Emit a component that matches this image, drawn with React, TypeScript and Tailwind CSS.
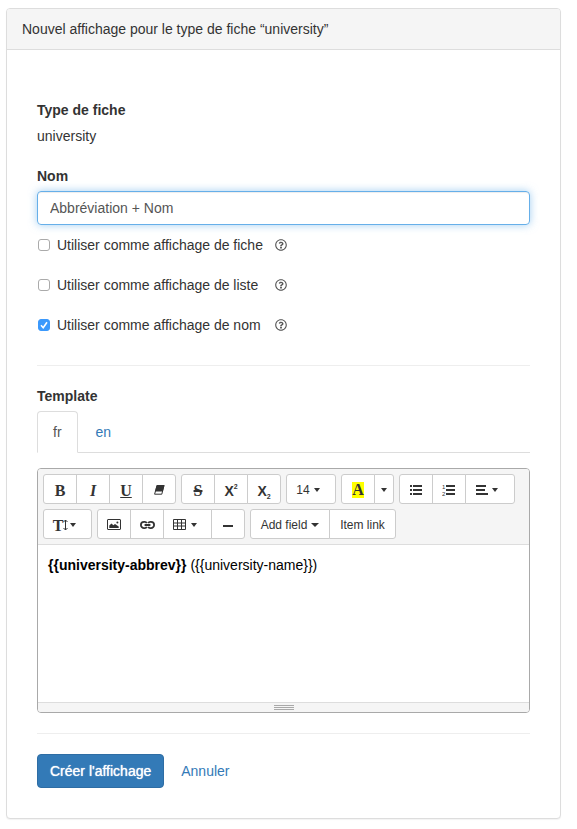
import { useState } from "react";
import type { ReactNode } from "react";
import { FaRegQuestionCircle } from "react-icons/fa";

function Caret() {
  return (
    <svg width="6" height="4" viewBox="0 0 6 4" className="shrink-0" aria-hidden="true">
      <path d="M0 0h6L3 4z" fill="currentColor" />
    </svg>
  );
}

function WideCaret() {
  return (
    <svg width="8" height="4" viewBox="0 0 8 4" className="shrink-0" aria-hidden="true">
      <path d="M0 0h8L4 4z" fill="currentColor" />
    </svg>
  );
}

function EraserIcon() {
  return (
    <svg width="12" height="12" viewBox="0 0 12 12" aria-hidden="true">
      <path d="M4 1.5h7L8.8 10.2H1.6z" fill="#fff" stroke="currentColor" strokeLinejoin="round" />
      <path d="M3.8 1h7.7L9.8 7.6H2z" fill="currentColor" />
    </svg>
  );
}

function PictureIcon() {
  return (
    <svg width="14" height="12" viewBox="0 0 14 12" aria-hidden="true">
      <rect x=".5" y=".5" width="13" height="10" rx=".5" fill="none" stroke="currentColor" />
      <path d="M2.3 9V6.6l2.2-2 1.8 1.6L8 5l3.7 2.6V9z" fill="currentColor" />
      <circle cx="10.4" cy="3.6" r="1" fill="currentColor" />
    </svg>
  );
}

function LinkIcon() {
  return (
    <svg width="15" height="10" viewBox="0 0 15 10" fill="none" stroke="currentColor" strokeWidth="1.8" aria-hidden="true">
      <path d="M6.8 3.2Q6.2 1.9 4.8 1.9H4a3.1 3.1 0 0 0 0 6.2h.8Q6.2 8.1 6.8 6.8" />
      <path d="M8.2 3.2Q8.8 1.9 10.2 1.9h.8a3.1 3.1 0 0 1 0 6.2h-.8Q8.8 8.1 8.2 6.8" />
      <path d="M4.6 5h5.8" />
    </svg>
  );
}

function TableIcon() {
  return (
    <svg width="14" height="12" viewBox="0 0 14 12" fill="none" stroke="currentColor" aria-hidden="true">
      <path d="M.5.5h12v10H.5zM.5 4h12M.5 7h12M4.5.5v10M8.5.5v10" />
    </svg>
  );
}

function BulletsIcon() {
  return (
    <svg width="14" height="12" viewBox="0 0 14 12" fill="currentColor" aria-hidden="true">
      <path d="M1 1h2v2H1zM1 5h2v2H1zM1 9h2v2H1zM4 1h9v2H4zM4 5h9v2H4zM4 9h9v2H4z" />
    </svg>
  );
}

function NumbersIcon() {
  return (
    <svg width="14" height="12" viewBox="0 0 14 12" fill="currentColor" aria-hidden="true">
      <path d="M4 1h9v2H4zM4 5h9v2H4zM4 9h9v2H4z" />
      <text x="0" y="5" fontSize="6" fontFamily="Liberation Sans">1</text>
      <text x="0" y="12" fontSize="6" fontFamily="Liberation Sans">2</text>
    </svg>
  );
}

function AlignIcon() {
  return (
    <svg width="12" height="10" viewBox="0 0 12 10" fill="currentColor" aria-hidden="true">
      <path d="M0 0h10v2H0zM0 4h9v2H0zM0 8h12v2H0z" />
    </svg>
  );
}

function HeightIcon() {
  return (
    <svg width="5" height="12" viewBox="0 0 5 12" fill="none" stroke="currentColor" aria-hidden="true">
      <path d="M2.5 1v10M.5 3l2-2 2 2M.5 9l2 2 2-2" />
    </svg>
  );
}

function Group({ children }: { children: ReactNode }) {
  return (
    <div className="flex -space-x-px *:first:rounded-l-[3px] *:last:rounded-r-[3px]">{children}</div>
  );
}

function Tool({ label, width = "w-[34px]", children }: { label: string; width?: string; children: ReactNode }) {
  return (
    <button
      type="button"
      aria-label={label}
      title={label}
      className={`flex h-[30px] ${width} items-center justify-center border border-[#ccc] bg-white pt-0.5 text-xs whitespace-nowrap text-[#333] hover:bg-[#e6e6e6]`}
    >
      {children}
    </button>
  );
}

const letter = "font-['Liberation_Serif',serif] text-base leading-5 font-bold pt-0.5";

function Option({ id, label, checked = false }: { id: string; label: string; checked?: boolean }) {
  return (
    <div className="grid grid-cols-[238px_auto] items-center justify-start">
      <label htmlFor={id} className="flex items-center gap-[7px] pl-px leading-5">
        <span className="grid size-3 shrink-0">
          <input
            id={id}
            type="checkbox"
            defaultChecked={checked}
            className="peer col-start-1 row-start-1 size-3 appearance-none rounded-[3px] border border-[#aaa] bg-white checked:border-[#3b99fc] checked:bg-[#3b99fc]"
          />
          <svg
            viewBox="0 0 12 12"
            className="pointer-events-none invisible col-start-1 row-start-1 size-3 peer-checked:visible"
            aria-hidden="true"
          >
            <path d="M3 6.3l2.2 2.4L9 3.2" fill="none" stroke="#fff" strokeWidth="1.6" />
          </svg>
        </span>
        {label}
      </label>
      <button type="button" aria-label="Aide" className="text-[#555]">
        <FaRegQuestionCircle size={12} />
      </button>
    </div>
  );
}

export default function App() {
  const [lang, setLang] = useState("fr");
  return (
    <main className="bg-white pt-2 pr-4 pb-2.5 pl-1.5 font-['Liberation_Sans',Arial,sans-serif] text-sm leading-5 text-[#333]">
      <section className="rounded border border-[#ddd] bg-white shadow-[0_1px_1px_rgba(0,0,0,0.05)]">
        <h1 className="rounded-t-[3px] border-b border-[#ddd] bg-[#f5f5f5] px-[15px] py-2.5">
          Nouvel affichage pour le type de fiche “university”
        </h1>
        <form className="px-[30px] pt-[50px] pb-[30px]" onSubmit={(e) => e.preventDefault()}>
          <dl>
            <dt className="font-bold">Type de fiche</dt>
            <dd className="mt-1.5">university</dd>
          </dl>

          <label htmlFor="name" className="mt-5 block font-bold">
            Nom
          </label>
          <input
            id="name"
            type="text"
            defaultValue="Abbréviation + Nom"
            className="mt-[5px] block h-[34px] w-full rounded border border-[#66afe9] px-3 py-1.5 text-[#555] shadow-[inset_0_1px_1px_rgba(0,0,0,0.075),0_0_8px_rgba(102,175,233,0.6)] outline-none"
          />

          <div className="mt-2.5 flex flex-col gap-5">
            <Option id="as-sheet" label="Utiliser comme affichage de fiche" />
            <Option id="as-list" label="Utiliser comme affichage de liste" />
            <Option id="as-name" label="Utiliser comme affichage de nom" checked />
          </div>

          <hr className="mt-[30px] mb-5 border-[#eee]" />

          <h2 className="font-bold">Template</h2>
          <div role="tablist" className="mt-[5px] flex gap-0.5 border-b border-[#ddd]">
            {["fr", "en"].map((code) => (
              <button
                key={code}
                type="button"
                role="tab"
                aria-selected={lang === code}
                onClick={() => setLang(code)}
                className="-mb-px rounded-t border border-transparent px-[15px] py-2.5 text-[#337ab7] aria-selected:border-[#ddd] aria-selected:border-b-white aria-selected:bg-white aria-selected:text-[#555]"
              >
                {code}
              </button>
            ))}
          </div>

          <div className="mt-[15px] overflow-hidden rounded border border-[#a9a9a9]">
            <div className="flex flex-wrap gap-[5px] border-b border-[#ddd] bg-[#f5f5f5] p-[5px]">
              <Group>
                <Tool label="Gras"><span className={letter}>B</span></Tool>
                <Tool label="Italique"><span className={`${letter} italic`}>I</span></Tool>
                <Tool label="Souligné"><span className={`${letter} underline`}>U</span></Tool>
                <Tool label="Effacer la mise en forme"><EraserIcon /></Tool>
              </Group>
              <Group>
                <Tool label="Barré"><span className={`${letter} line-through decoration-2`}>S</span></Tool>
                <Tool label="Exposant">
                  <span className="flex items-start pt-0.5 text-sm leading-5 font-bold">X<span className="text-[7px] leading-3">2</span></span>
                </Tool>
                <Tool label="Indice">
                  <span className="flex items-end pt-0.5 text-sm leading-5 font-bold">X<span className="text-[7px] leading-2">2</span></span>
                </Tool>
              </Group>
              <Group>
                <Tool label="Taille de la police" width="w-[50px] pr-1.5"><span className="mr-1">14</span><Caret /></Tool>
              </Group>
              <Group>
                <Tool label="Couleur">
                  <span className="bg-[#ff0] font-['Liberation_Serif',serif] text-base leading-4 font-bold">A</span>
                </Tool>
                <Tool label="Plus de couleurs" width="w-5"><Caret /></Tool>
              </Group>
              <Group>
                <Tool label="Liste à puces"><BulletsIcon /></Tool>
                <Tool label="Liste numérotée"><NumbersIcon /></Tool>
                <Tool label="Paragraphe" width="w-[50px] pr-1.5"><span className="mr-1"><AlignIcon /></span><Caret /></Tool>
              </Group>
              <Group>
                <Tool label="Interligne" width="w-[49px] pr-1.5">
                  <span className={letter}>T</span><span className="mr-0.5"><HeightIcon /></span><Caret />
                </Tool>
              </Group>
              <Group>
                <Tool label="Image"><PictureIcon /></Tool>
                <Tool label="Lien"><LinkIcon /></Tool>
                <Tool label="Tableau" width="w-[49px] pr-1.5"><span className="mr-1"><TableIcon /></span><Caret /></Tool>
                <Tool label="Ligne horizontale"><span className="mt-0.5 h-0.5 w-2.5 bg-[#333]" /></Tool>
              </Group>
              <Group>
                <Tool label="Add field" width="w-20"><span className="mr-1">Add field</span><WideCaret /></Tool>
                <Tool label="Item link" width="w-[67px]">Item link</Tool>
              </Group>
            </div>
            <div
              role="textbox"
              aria-label="Template"
              aria-multiline="true"
              contentEditable
              suppressContentEditableWarning
              className="min-h-[157px] bg-white p-2.5 text-black outline-none"
            >
              <b>{"{{university-abbrev}}"}</b> {"({{university-name}})"}
            </div>
            <div className="flex cursor-ns-resize flex-col items-center gap-px border-t border-[#ddd] bg-[#f5f5f5] py-0.5">
              <span className="h-px w-5 bg-[#a9a9a9]" />
              <span className="h-px w-5 bg-[#a9a9a9]" />
              <span className="h-px w-5 bg-[#a9a9a9]" />
            </div>
          </div>

          <hr className="my-5 border-[#eee]" />

          <div className="flex items-center gap-[5px]">
            <button
              type="submit"
              className="rounded border border-[#2e6da4] bg-[#337ab7] px-3 py-1.5 text-white [text-shadow:0_0_1px_#fff]"
            >
              Créer l'affichage
            </button>
            <a href="#annuler" className="px-3 py-1.5 text-[#337ab7]">
              Annuler
            </a>
          </div>
        </form>
      </section>
    </main>
  );
}
